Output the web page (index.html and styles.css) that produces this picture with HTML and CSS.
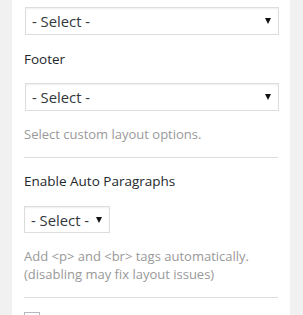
FILE: index.html
```html
<!DOCTYPE html>
<html lang="en">
  <head>
    <meta charset="UTF-8" />
    <meta name="viewport" content="width=device-width, initial-scale=1.0" />
    <link rel="stylesheet" href="styles.css">
    <title>Layout options</title>
  </head>

  <body>
    <div class="panel">
      <div class="select-wrap select-wrap--full">
        <select class="field-select">
          <option>- Select -</option>
        </select>
      </div>

      <label class="field-label">Footer</label>
      <div class="select-wrap select-wrap--full">
        <select class="field-select">
          <option>- Select -</option>
        </select>
      </div>
      <p class="field-desc">Select custom layout options.</p>

      <hr class="divider" />

      <label class="field-label">Enable Auto Paragraphs</label>
      <div class="select-wrap">
        <select class="field-select field-select--small">
          <option>- Select -</option>
        </select>
      </div>
      <p class="field-desc">
        Add &lt;p&gt; and &lt;br&gt; tags automatically.<br />
        (disabling may fix layout issues)
      </p>

      <hr class="divider" />

      <input class="field-check" type="checkbox" />
    </div>
  </body>
</html>
```

FILE: styles.css
```css
body {
  margin: 0;
  background-color: #f1f1f1;
  font-family: "Open Sans", "Liberation Sans", sans-serif;
  color: #333;
}
.panel {
  margin: 0 13px 0 12px;
  padding: 7px 12px 0;
  background-color: #fff;
  min-height: 315px;
  box-sizing: border-box;
  display: flex;
  flex-direction: column;
  align-items: flex-start;
}
.select-wrap {
  position: relative;
}
.select-wrap--full {
  align-self: stretch;
  margin-left: 1px;
  margin-right: -1px;
}
.select-wrap::after {
  content: "";
  position: absolute;
  right: 8px;
  top: 11px;
  border-left: 3.5px solid transparent;
  border-right: 3.5px solid transparent;
  border-top: 6px solid #111;
  pointer-events: none;
}
.field-select {
  -webkit-appearance: none;
  appearance: none;
  display: block;
  width: 100%;
  height: 28px;
  margin: 0;
  padding: 0 24px 0 6px;
  border: 1px solid #ddd;
  border-radius: 0;
  box-shadow: inset 0 1px 2px rgba(0, 0, 0, 0.07);
  background-color: #fff;
  font-family: inherit;
  font-size: 14.8px;
  color: #32373c;
}
.field-select--small {
  width: 86px;
  height: 27px;
  padding-right: 14px;
}
.field-label {
  display: block;
  margin: 15px 0 15px;
  font-size: 13.5px;
  line-height: 18px;
  color: #23282d;
}
.divider + .field-label {
  margin-top: 14px;
  margin-bottom: 16px;
}
.field-desc {
  margin: 14px 0 14px;
  font-size: 13px;
  line-height: 18px;
  color: #999;
}
.divider {
  align-self: stretch;
  margin: 0;
  border: 0;
  border-top: 1px solid #ddd;
}
.field-check {
  -webkit-appearance: none;
  appearance: none;
  margin: 14px 0 0;
  width: 16px;
  height: 16px;
  border: 1px solid #b4b9be;
  background: #fff;
}
```
